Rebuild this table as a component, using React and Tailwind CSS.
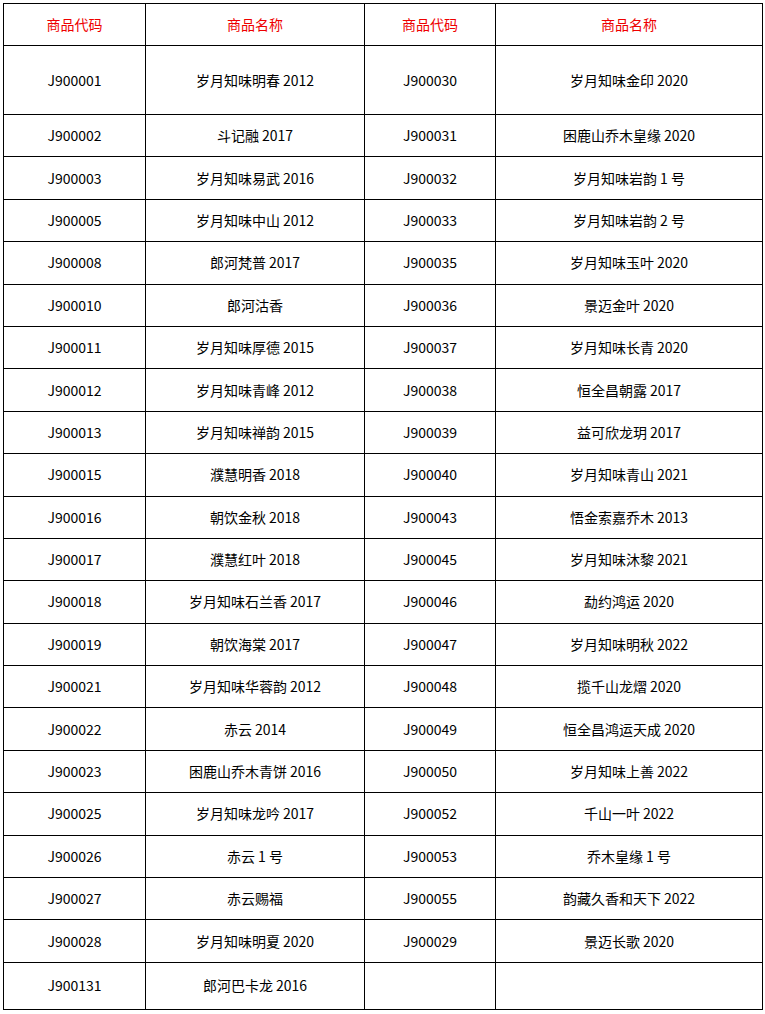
import React from 'react';

const rows = [
  ['J900001', '岁月知味明春 2012', 'J900030', '岁月知味金印 2020'],
  ['J900002', '斗记融 2017', 'J900031', '困鹿山乔木皇缘 2020'],
  ['J900003', '岁月知味易武 2016', 'J900032', '岁月知味岩韵 1 号'],
  ['J900005', '岁月知味中山 2012', 'J900033', '岁月知味岩韵 2 号'],
  ['J900008', '郎河梵普 2017', 'J900035', '岁月知味玉叶 2020'],
  ['J900010', '郎河沽香', 'J900036', '景迈金叶 2020'],
  ['J900011', '岁月知味厚德 2015', 'J900037', '岁月知味长青 2020'],
  ['J900012', '岁月知味青峰 2012', 'J900038', '恒全昌朝露 2017'],
  ['J900013', '岁月知味禅韵 2015', 'J900039', '益可欣龙玥 2017'],
  ['J900015', '濮慧明香 2018', 'J900040', '岁月知味青山 2021'],
  ['J900016', '朝饮金秋 2018', 'J900043', '悟金索嘉乔木 2013'],
  ['J900017', '濮慧红叶 2018', 'J900045', '岁月知味沐黎 2021'],
  ['J900018', '岁月知味石兰香 2017', 'J900046', '勐约鸿运 2020'],
  ['J900019', '朝饮海棠 2017', 'J900047', '岁月知味明秋 2022'],
  ['J900021', '岁月知味华蓉韵 2012', 'J900048', '揽千山龙熠 2020'],
  ['J900022', '赤云 2014', 'J900049', '恒全昌鸿运天成 2020'],
  ['J900023', '困鹿山乔木青饼 2016', 'J900050', '岁月知味上善 2022'],
  ['J900025', '岁月知味龙吟 2017', 'J900052', '千山一叶 2022'],
  ['J900026', '赤云 1 号', 'J900053', '乔木皇缘 1 号'],
  ['J900027', '赤云赐福', 'J900055', '韵藏久香和天下 2022'],
  ['J900028', '岁月知味明夏 2020', 'J900029', '景迈长歌 2020'],
  ['J900131', '郎河巴卡龙 2016', '', ''],
];

const cell = 'border border-black text-center align-middle p-0';

export default function App() {
  return (
    <div className="bg-white w-[765px] h-[1014px] pt-[3px] pl-[3px] font-['Noto_Sans_CJK_SC',sans-serif] text-[14px] text-black">
      <table className="border-collapse w-[759px] table-fixed">
        <colgroup>
          <col className="w-[142px]" />
          <col className="w-[219px]" />
          <col className="w-[131px]" />
          <col className="w-[267px]" />
        </colgroup>
        <thead>
          <tr className="h-[42px] text-[#ee0000]">
            <th className={`${cell} font-normal`}>商品代码</th>
            <th className={`${cell} font-normal`}>商品名称</th>
            <th className={`${cell} font-normal`}>商品代码</th>
            <th className={`${cell} font-normal`}>商品名称</th>
          </tr>
        </thead>
        <tbody>
          {rows.map((r, i) => (
            <tr
              key={r[0]}
              className={i === 0 ? 'h-[69px]' : i === rows.length - 1 ? 'h-[47px]' : 'h-[42.4px]'}
            >
              <td className={cell}>{r[0]}</td>
              <td className={cell}>{r[1]}</td>
              <td className={cell}>{r[2]}</td>
              <td className={cell}>{r[3]}</td>
            </tr>
          ))}
        </tbody>
      </table>
    </div>
  );
}
